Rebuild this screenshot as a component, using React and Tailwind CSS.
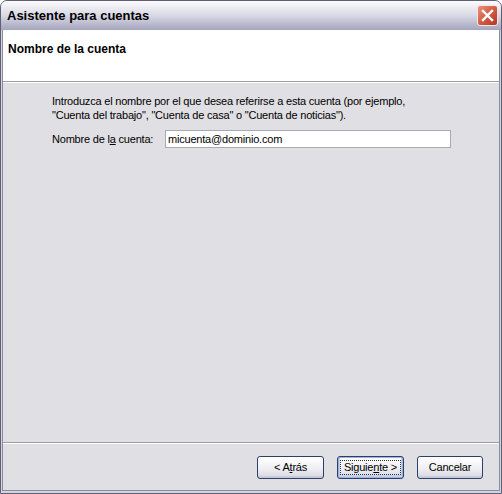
import React from 'react';

const font = { fontFamily: '"Liberation Sans", Arial, sans-serif' };

// Windows XP silver style wizard button
const XpButton = ({ children, isDefault, w = 'w-[67px]' }) => (
  <button
    className={`${w} h-[23px] rounded-[3px] border border-[#2c3f68] bg-gradient-to-b from-[#ffffff] via-[#f1f1f5] to-[#d6d7e2] text-[11px] tracking-[-0.2px] text-black flex items-center justify-center ${
      isDefault ? 'shadow-[inset_0_0_0_1px_#9fb3e0,inset_0_-1px_0_2px_#c4d0ee]' : 'shadow-[inset_0_-2px_0_#c9cad6]'
    }`}
  >
    <span
      className={`px-[3px] leading-[13px] ${isDefault ? 'outline outline-1 outline-dotted outline-[#333] outline-offset-[0px]' : ''}`}
    >
      {children}
    </span>
  </button>
);

export default function App() {
  return (
    <div
      className="w-[502px] h-[494px] flex flex-col border border-[#5f5f78] rounded-t-[7px] bg-[#d4d4de] overflow-hidden"
      style={font}
    >
      {/* Title bar */}
      <div className="h-[29px] shrink-0 flex items-center justify-between pl-[6px] pr-[3px] bg-gradient-to-b from-[#fbfbfd] via-[#d9d9e5] to-[#a4a4bd]">
        <span className="text-[13px] font-bold text-black leading-none">Asistente para cuentas</span>
        <div className="w-[21px] h-[21px] rounded-[3px] border border-[#f4e6e3] bg-gradient-to-br from-[#e9927d] via-[#d25c44] to-[#b2341f] flex items-center justify-center">
          <svg width="13" height="13" viewBox="0 0 13 13">
            <path d="M2 2 L11 11 M11 2 L2 11" stroke="#fff" strokeWidth="2.4" strokeLinecap="square" />
          </svg>
        </div>
      </div>

      {/* Client area */}
      <div className="flex-1 flex flex-col mx-[1px] mb-[2px] border border-t-0 border-[#8b8ba0]">
        {/* Header */}
        <div className="h-[51px] shrink-0 bg-white pl-[5px] pt-[6px]">
          <span className="text-[12px] font-bold text-black">Nombre de la cuenta</span>
        </div>
        <div className="h-px bg-[#9d9da1]" />
        <div className="h-px bg-white" />

        {/* Body */}
        <div className="flex-1 bg-[#e0dfe3] pl-[49px] pt-[11px] text-[11px] tracking-[-0.2px] text-black">
          <p className="leading-[14px]">
            Introduzca el nombre por el que desea referirse a esta cuenta (por ejemplo,
            <br />
            "Cuenta del trabajo", "Cuenta de casa" o "Cuenta de noticias").
          </p>
          <div className="flex items-center mt-[8px]">
            <span className="w-[113px]">
              Nombre de l<span className="underline">a</span> cuenta:
            </span>
            <div className="w-[286px] h-[18px] border border-[#a5acb2] bg-white flex items-center pl-[2px]">
              micuenta@dominio.com
            </div>
          </div>
        </div>

        <div className="h-px bg-[#9d9da1]" />
        <div className="h-px bg-white" />

        {/* Footer */}
        <div className="h-[46px] shrink-0 bg-[#e0dfe3] flex justify-end items-start pt-[12px] pr-[16px] gap-[13px]">
          <XpButton>
            &lt; A<span className="underline">t</span>rás
          </XpButton>
          <XpButton isDefault>
            Siguie<span className="underline">n</span>te &gt;
          </XpButton>
          <XpButton w="w-[66px]">Cancelar</XpButton>
        </div>
      </div>
    </div>
  );
}
